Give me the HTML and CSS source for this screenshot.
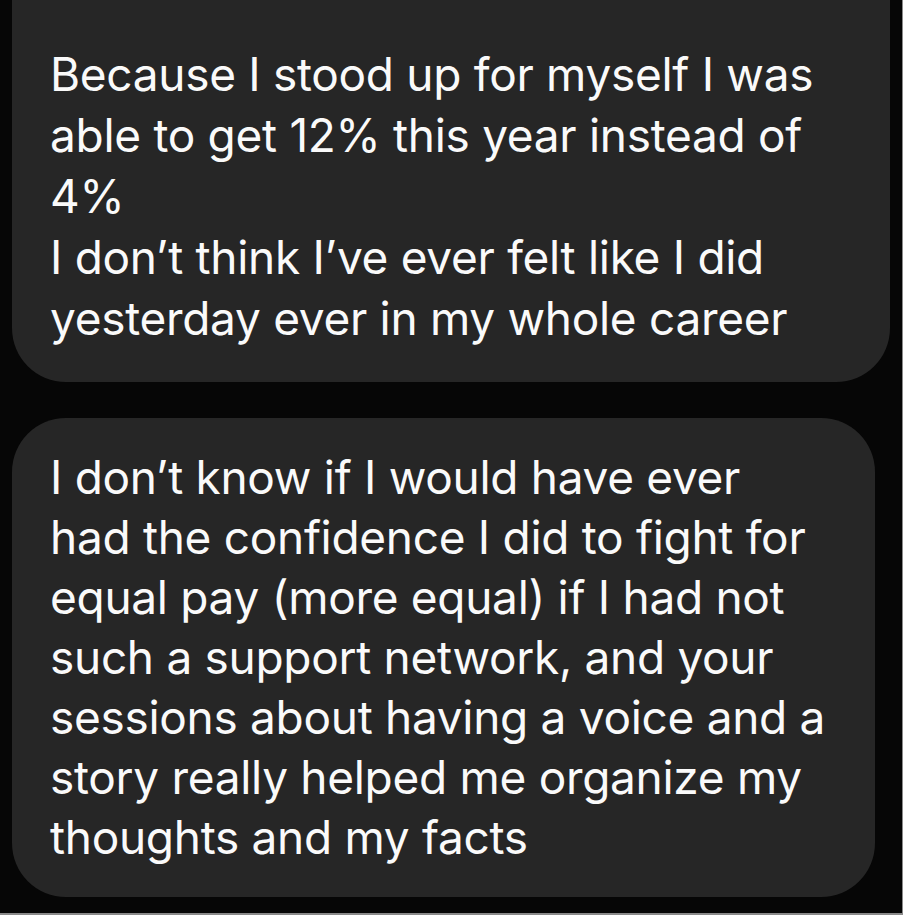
FILE: index.html
```html
<!DOCTYPE html>
<html lang="en">
<head>
<meta charset="utf-8">
<title>Messages</title>
<link rel="stylesheet" href="styles.css">
</head>
<body>
<div class="screen">
  <div class="thread">
    <div class="bubble bubble-first">
      <p class="msg msg-first">Because I stood up for myself I was<br>able to get 12% this year instead of<br>4%<br>I don’t think I’ve ever felt like I did<br>yesterday ever in my whole career</p>
    </div>
    <div class="bubble bubble-second">
      <p class="msg">I don’t know if I would have ever<br>had the confidence I did to fight for<br>equal pay (more equal) if I had not<br>such a support network, and your<br>sessions about having a voice and a<br>story really helped me organize my<br>thoughts and my facts</p>
    </div>
  </div>
</div>
</body>
</html>
```

FILE: styles.css
```css
html, body {
  margin: 0;
  padding: 0;
  background: #000;
}

.screen {
  width: 902px;
  height: 913px;
  background: #060606;
  border-right: 1px solid #8a8a8a;
  border-bottom: 2px solid #8a8a8a;
  overflow: hidden;
  box-sizing: content-box;
}

.thread {
  display: flex;
  flex-direction: column;
  align-items: flex-start;
  gap: 36px;
  padding-left: 12px;
}

.bubble {
  background: #262626;
  box-sizing: border-box;
}

.bubble-first {
  width: 878px;
  padding: 44px 20px 33px 38px;
  border-radius: 0 0 54px 54px;
}

.bubble-second {
  width: 863px;
  padding: 29px 20px 30px 38px;
  border-radius: 54px;
}

.msg {
  margin: 0;
  color: #fafafa;
  font-family: Inter, "Liberation Sans", Arial, sans-serif;
  font-size: 46px;
  line-height: 60px;
  letter-spacing: -0.3px;
  white-space: nowrap;
}

.msg-first {
  line-height: 61px;
}
```
